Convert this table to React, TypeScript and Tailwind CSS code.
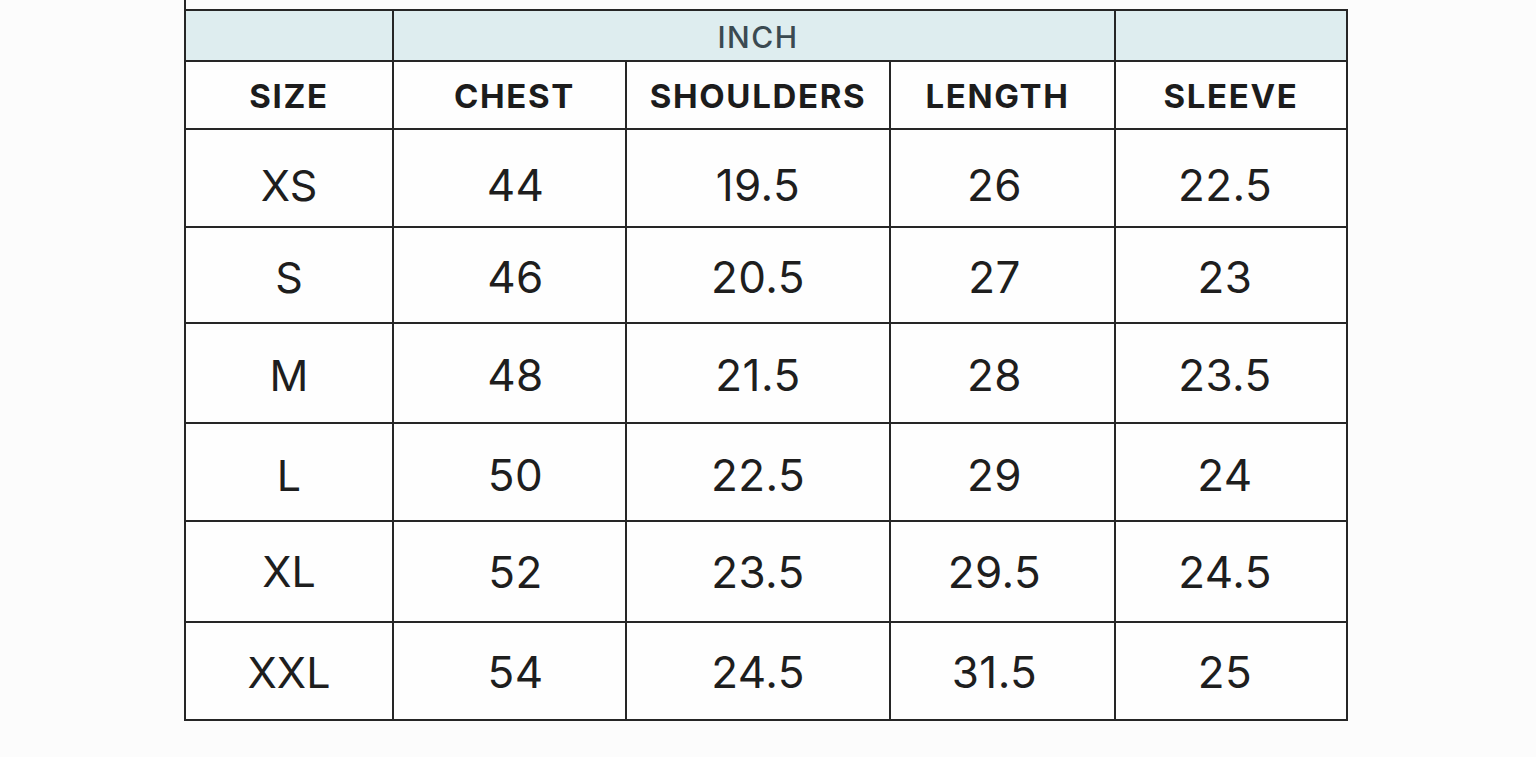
import React from 'react';

const rows: { size: string; vals: string[]; h: string }[] = [
  { size: 'XS', vals: ['44', '19.5', '26', '22.5'], h: 'h-[98px] pt-[14px]' },
  { size: 'S', vals: ['46', '20.5', '27', '23'], h: 'h-[96px] pt-[4px]' },
  { size: 'M', vals: ['48', '21.5', '28', '23.5'], h: 'h-[100px] pt-[4px]' },
  { size: 'L', vals: ['50', '22.5', '29', '24'], h: 'h-[98px] pt-[6px]' },
  { size: 'XL', vals: ['52', '23.5', '29.5', '24.5'], h: 'h-[101px]' },
  { size: 'XXL', vals: ['54', '24.5', '31.5', '25'], h: 'h-[98px] pt-[2px]' },
];

const headers = [
  { label: 'SIZE', nudge: '' },
  { label: 'CHEST', nudge: 'pl-[10px]' },
  { label: 'SHOULDERS', nudge: '' },
  { label: 'LENGTH', nudge: 'pr-[10px]' },
  { label: 'SLEEVE', nudge: '' },
];

// the printed chart isn't perfectly centred in every column
const valueNudge = ['pl-[12px]', '', 'pr-[16px]', 'pr-[12px]'];

const cell = 'flex items-center justify-center border-r-2 border-b-2 border-[#262626]';

const App: React.FC = () => {
  return (
    <div
      className="min-h-[757px] w-full bg-[#fcfcfc] text-[#1e1e1e]"
      style={{ fontFamily: 'Inter, "Open Sans", sans-serif' }}
    >
      {/* stub of the line above the cropped table */}
      <div className="ml-[184px] h-[9px] border-l-2 border-[#262626]" />

      <div className="ml-[184px] w-fit border-l-2 border-t-2 border-[#262626] bg-[#fefefe]">
        {/* UNIT ROW */}
        <div className="grid grid-cols-[208px_722px_232px] h-[50px] bg-[#deedef]">
          <div className={cell} />
          <div className={`${cell} pt-[4px] pl-[8px] text-[30px] font-medium tracking-[0.05em] text-[#3b4a51]`}>
            INCH
          </div>
          <div className={cell} />
        </div>

        {/* COLUMN HEADERS */}
        <div className="grid grid-cols-[208px_233px_264px_225px_232px] h-[69px]">
          {headers.map(h => (
            <div
              key={h.label}
              className={`${cell} ${h.nudge} pt-[4px] text-[33px] font-bold tracking-[0.05em] text-[#1c1c1c]`}
            >
              {h.label}
            </div>
          ))}
        </div>

        {/* MEASUREMENTS */}
        {rows.map(r => (
          <div key={r.size} className="grid grid-cols-[208px_233px_264px_225px_232px]">
            <div className={`${cell} ${r.h} text-[43px]`}>{r.size}</div>
            {r.vals.map((v, i) => (
              <div key={i} className={`${cell} ${r.h} ${valueNudge[i]} text-[44px] tracking-[0.01em]`}>
                {v}
              </div>
            ))}
          </div>
        ))}
      </div>
    </div>
  );
};

export default App;
